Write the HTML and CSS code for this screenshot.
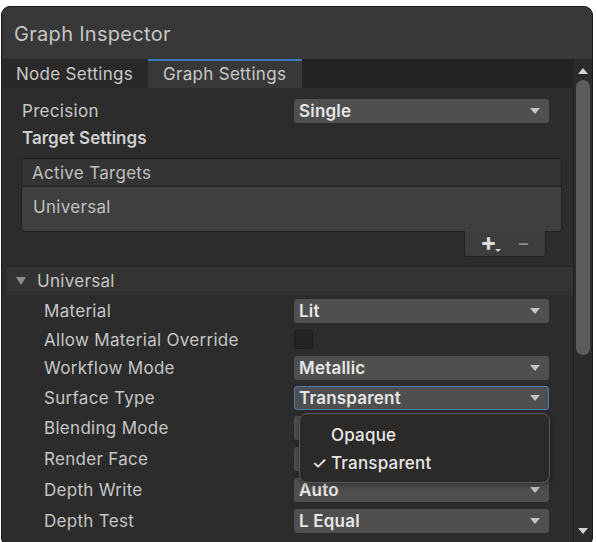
FILE: index.html
```html
<!DOCTYPE html>
<html>
<head>
<meta charset="utf-8">
<link rel="stylesheet" href="styles.css">
</head>
<body>
<div class="window">
  <div class="titlebar">Graph Inspector</div>
  <div class="body">
    <div class="main">
      <div class="tabs">
        <div class="tab">Node Settings</div>
        <div class="tab active">Graph Settings</div>
        <div class="tab-fill"></div>
      </div>
      <div class="content">
        <div class="grid top">
          <div class="label">Precision</div>
          <div class="dropdown"><span>Single</span><i class="arrow"></i></div>
        </div>
        <div class="section-title">Target Settings</div>
        <div class="listbox">
          <div class="list-head">Active Targets</div>
          <div class="list-body">Universal</div>
        </div>
        <div class="list-foot-row">
          <div class="list-foot">
            <span class="plus">+<i class="mini-arrow"></i></span>
            <span class="minus">−</span>
          </div>
        </div>
        <div class="foldout"><i class="fold-arrow"></i>Universal</div>
        <div class="grid props">
          <div class="label">Material</div>
          <div class="dropdown"><span>Lit</span><i class="arrow"></i></div>
          <div class="label">Allow Material Override</div>
          <div class="cell"><div class="checkbox"></div></div>
          <div class="label">Workflow Mode</div>
          <div class="dropdown"><span>Metallic</span><i class="arrow"></i></div>
          <div class="label">Surface Type</div>
          <div class="dropdown focus"><span>Transparent</span><i class="arrow"></i></div>
          <div class="label">Blending Mode</div>
          <div class="dropdown"><span></span><i class="arrow"></i></div>
          <div class="label">Render Face</div>
          <div class="dropdown"><span></span><i class="arrow"></i></div>
          <div class="label">Depth Write</div>
          <div class="dropdown"><span>Auto</span><i class="arrow"></i></div>
          <div class="label">Depth Test</div>
          <div class="dropdown"><span>L Equal</span><i class="arrow"></i></div>
        </div>
      </div>
    </div>
    <div class="scrollbar">
      <i class="sb-up"></i>
      <div class="sb-track"><div class="sb-thumb"></div></div>
      <i class="sb-down"></i>
    </div>
  </div>
  <div class="popup">
    <div class="item"><span class="check"></span>Opaque</div>
    <div class="item"><span class="check">✓</span>Transparent</div>
  </div>
</div>
</body>
</html>
```
FILE: styles.css
```css
html, body {
  margin: 0;
  padding: 0;
  background: #ffffff;
  overflow: hidden;
}
body {
  font-family: Inter, "Noto Sans", "Liberation Sans", sans-serif;
  width: 597px;
  height: 542px;
}
.window {
  position: relative;
  margin: 6px 0 0 1px;
  width: 592px;
  height: 540px;
  background: #2c2c2c;
  border: 1px solid #1a1a1a;
  border-radius: 9px 9px 8px 8px;
  box-sizing: border-box;
  overflow: hidden;
  display: flex;
  flex-direction: column;
}
.titlebar {
  height: 52px;
  flex: none;
  background: #383838;
  color: #c6c6c6;
  font-size: 20px;
  letter-spacing: 0.3px;
  padding-left: 12px;
  display: flex;
  align-items: center;
  box-sizing: border-box;
  padding-top: 1px;
}
.body {
  flex: 1;
  display: flex;
  min-height: 0;
}
.main {
  flex: 1;
  display: flex;
  flex-direction: column;
  min-width: 0;
}
.tabs {
  height: 29px;
  flex: none;
  display: flex;
  background: #232323;
}
.tab {
  width: 146px;
  background: #292929;
  color: #c8c8c8;
  font-size: 17px;
  letter-spacing: 0.3px;
  display: flex;
  align-items: center;
  padding-left: 14px;
  box-sizing: border-box;
}
.tab.active {
  width: 154px;
  background: #383838;
  border-top: 2px solid #3b78bd;
  padding-left: 15px;
  padding-bottom: 2px;
}
.tab-fill {
  flex: 1;
}
.content {
  flex: 1;
  padding-top: 8px;
  padding-right: 23px;
}
.grid {
  display: grid;
  align-items: center;
}
.grid.top {
  grid-template-columns: 272px 255px;
  padding-left: 20px;
  grid-auto-rows: 29px;
}
.label {
  color: #c6c6c6;
  font-size: 17px;
  letter-spacing: 0.3px;
}
.dropdown {
  height: 24px;
  background: #4f4f4f;
  border-radius: 3px;
  display: flex;
  align-items: center;
  justify-content: space-between;
  padding: 0 9px 0 5px;
  box-sizing: border-box;
  color: #e6e6e6;
  font-size: 17px;
  font-weight: 600;
  letter-spacing: 0.2px;
}
.dropdown.focus {
  border: 1px solid #4b7bb3;
  padding-left: 4px;
  padding-right: 8px;
}
.arrow {
  width: 0;
  height: 0;
  border-left: 5px solid transparent;
  border-right: 5px solid transparent;
  border-top: 6px solid #c4c4c4;
}
.section-title {
  color: #d0d0d0;
  font-size: 17px;
  font-weight: 600;
  padding-left: 20px;
  height: 26px;
  line-height: 26px;
}
.listbox {
  margin: 7px 0 0 19px;
  width: 539px;
  border: 1px solid #202020;
  border-radius: 3px;
  overflow: hidden;
}
.list-head {
  background: #333333;
  border-bottom: 1px solid #1f1f1f;
  color: #c0c0c0;
  font-size: 17px;
  letter-spacing: 0.3px;
  padding-left: 10px;
  display: flex;
  align-items: center;
  box-sizing: border-box;
  height: 28px;
}
.list-body {
  height: 44px;
  background: #3f3f3f;
  color: #c0c0c0;
  font-size: 17px;
  letter-spacing: 0.3px;
  padding-left: 11px;
  padding-bottom: 4px;
  display: flex;
  align-items: center;
  box-sizing: border-box;
}
.list-foot-row {
  display: flex;
  justify-content: flex-end;
  padding-right: 4px;
}
.list-foot {
  width: 82px;
  height: 26px;
  background: #3d3d3d;
  border: 1px solid #222;
  border-top: none;
  border-radius: 0 0 3px 3px;
  display: flex;
  align-items: center;
  justify-content: center;
  gap: 20px;
  box-sizing: border-box;
  margin-top: -1px;
}
.plus {
  position: relative;
  color: #dcdcdc;
  font-size: 25px;
  font-weight: 700;
  line-height: 1;
  margin-top: -2px;
}
.mini-arrow {
  position: absolute;
  right: -4px;
  bottom: 3px;
  width: 0;
  height: 0;
  border-left: 3px solid transparent;
  border-right: 3px solid transparent;
  border-top: 3px solid #d8d8d8;
}
.minus {
  color: #8c8c8c;
  font-size: 20px;
  line-height: 1;
  margin-top: -2px;
}
.foldout {
  margin: 9px -23px 0 5px;
  border-top: 1px solid #222;
  height: 29px;
  background: #333333;
  color: #c6c6c6;
  font-size: 17px;
  letter-spacing: 0.3px;
  display: flex;
  align-items: center;
  padding-left: 9px;
  box-sizing: border-box;
}
.fold-arrow {
  width: 0;
  height: 0;
  border-left: 5px solid transparent;
  border-right: 5px solid transparent;
  border-top: 8px solid #8e8e8e;
  margin-right: 11px;
}
.grid.props {
  grid-template-columns: 250px 255px;
  grid-template-rows: 30px 27px 29px 31px 30px 31px 31px 31px;
  padding-left: 42px;
  padding-top: 1px;
}
.cell {
  display: flex;
  align-items: center;
}
.checkbox {
  width: 17px;
  height: 17px;
  background: #242424;
  border: 1px solid #1a1a1a;
  border-radius: 3px;
}
.scrollbar {
  width: 18px;
  flex: none;
  background: #2b2b2b;
  border-left: 1px solid #222;
  display: flex;
  flex-direction: column;
  align-items: center;
}
.sb-up, .sb-down {
  width: 0;
  height: 0;
  border-left: 5px solid transparent;
  border-right: 5px solid transparent;
}
.sb-up {
  margin-top: 9px;
  border-bottom: 6px solid #d4d4d4;
}
.sb-down {
  margin-bottom: 11px;
  border-top: 6px solid #d4d4d4;
}
.sb-track {
  flex: 1;
  width: 100%;
  padding-top: 6px;
  display: flex;
  justify-content: center;
}
.sb-thumb {
  width: 14px;
  height: 275px;
  background: #5c5c5c;
  border-radius: 7px;
}
.popup {
  position: absolute;
  left: 297px;
  top: 406px;
  width: 251px;
  height: 70px;
  box-sizing: border-box;
  background: #2c2929;
  border: 1px solid #585656;
  border-radius: 8px;
  padding-top: 7px;
  box-shadow: 0 2px 6px rgba(0,0,0,0.4);
}
.popup .item {
  height: 28px;
  display: flex;
  align-items: center;
  color: #e8e8e8;
  font-size: 17px;
  font-weight: 500;
  letter-spacing: 0.2px;
}
.popup .check {
  width: 31px;
  padding-left: 12px;
  box-sizing: border-box;
  font-size: 17px;
}
```
